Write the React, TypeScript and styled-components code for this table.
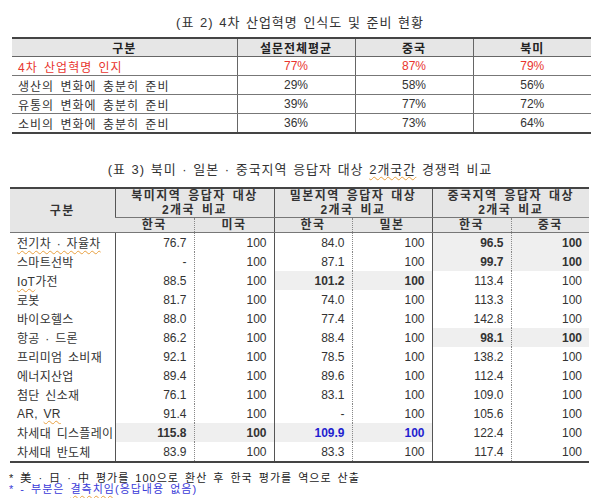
import React from "react";
import styled, { createGlobalStyle, css } from "styled-components";

const Global = createGlobalStyle`
  html, body { margin: 0; padding: 0; background: #ffffff; }
  body { font-family: "Liberation Sans", "Noto Sans CJK KR", sans-serif; color: #222222; }
`;

const Page = styled.div`
  width: 600px;
  height: 498px;
  box-sizing: border-box;
  padding: 14px 0 0 0;
  overflow: hidden;
`;

const Title = styled.div<{ $mt?: number }>`
  text-align: center;
  font-size: 13px;
  line-height: 18px;
  letter-spacing: 1px;
  word-spacing: 1px;
  color: #333333;
  margin-top: ${(p) => p.$mt ?? 0}px;
`;

const Squiggle = styled.span`
  text-decoration: underline wavy #e8a040;
  text-decoration-thickness: 1px;
  text-underline-offset: 2px;
`;

/* ---------- Table 2 ---------- */

const Table2 = styled.table`
  margin: 5px 0 0 12px;
  width: 579px;
  border-collapse: collapse;
  table-layout: fixed;
  border-top: 2px solid #444444;
  border-bottom: 2px solid #444444;
  font-size: 12px;
`;

const T2Head = styled.th`
  height: 17px;
  padding: 0;
  background: #e6e6e6;
  font-weight: bold;
  font-size: 12px;
  letter-spacing: 1px;
  text-align: center;
  border-bottom: 1px solid #666666;
  border-left: 1px solid #666666;
  &:first-child { border-left: none; }
`;

const T2Cell = styled.td<{ $red?: boolean; $label?: boolean }>`
  height: 18px;
  padding: 0 0 0 ${(p) => (p.$label ? 6 : 0)}px;
  text-align: ${(p) => (p.$label ? "left" : "center")};
  color: ${(p) => (p.$red ? "#e8352e" : "#333333")};
  letter-spacing: ${(p) => (p.$label ? "1px" : "0")};
  word-spacing: ${(p) => (p.$label ? "2px" : "0")};
  border-bottom: 1px solid #777777;
  border-left: 1px solid #666666;
  white-space: nowrap;
  &:first-child { border-left: none; }
`;

/* ---------- Table 3 ---------- */

const Table3 = styled.table`
  margin: 8px 0 0 10px;
  width: 579px;
  border-collapse: collapse;
  table-layout: fixed;
  border-top: 2px solid #444444;
  border-bottom: 2px solid #444444;
  font-size: 12px;
`;

const T3Head = styled.th<{ $dashedRight?: boolean; $sub?: boolean }>`
  padding: 0;
  background: #e6e6e6;
  font-weight: bold;
  font-size: 12px;
  line-height: 14px;
  letter-spacing: 1.5px;
  word-spacing: 2px;
  text-align: center;
  color: #333333;
  height: ${(p) => (p.$sub ? 14 : 28)}px;
  border-bottom: 1px solid #777777;
  border-left: 1px solid #555555;
  &:first-child { border-left: none; }
  ${(p) =>
    p.$dashedRight &&
    css`
      border-right: 1px dotted #888888;
    `}
`;

const T3Row = styled.tr``;

const T3Label = styled.td`
  height: 19px;
  padding: 0 0 0 7px;
  text-align: left;
  color: #333333;
  white-space: nowrap;
  letter-spacing: 0.3px;
  word-spacing: 2px;
`;

const T3Cell = styled.td<{ $solidLeft?: boolean; $hl?: boolean; $bold?: boolean; $blue?: boolean }>`
  height: 19px;
  padding: 0 7px 0 0;
  text-align: right;
  white-space: nowrap;
  color: ${(p) => (p.$blue ? "#1f1fd0" : "#333333")};
  font-weight: ${(p) => (p.$bold ? "bold" : "normal")};
  background: ${(p) => (p.$hl ? "#efefef" : "transparent")};
  border-left: ${(p) => (p.$solidLeft ? "1px solid #555555" : "1px dotted #888888")};
`;

const Notes = styled.div`
  margin: 10px 0 0 9px;
  font-size: 11px;
  line-height: 11px;
  letter-spacing: 1px;
  word-spacing: 2px;
`;

const NoteLine = styled.div<{ $blue?: boolean }>`
  color: ${(p) => (p.$blue ? "#3a3ad8" : "#222222")};
`;

type Pair = [string, string];
type Region = { v: Pair; hl?: boolean; bold?: boolean; blue?: boolean };
type Row = { label: React.ReactNode; regions: [Region, Region, Region] };

const r = (a: string, b: string, flags: Partial<Region> = {}): Region => ({ v: [a, b], ...flags });
const HB = { hl: true, bold: true };

const rows: Row[] = [
  { label: <Squiggle>전기차 · 자율차</Squiggle>, regions: [r("76.7", "100"), r("84.0", "100"), r("96.5", "100", HB)] },
  { label: "스마트선박", regions: [r("-", "100"), r("87.1", "100"), r("99.7", "100", HB)] },
  { label: <><Squiggle>IoT</Squiggle>가전</>, regions: [r("88.5", "100"), r("101.2", "100", HB), r("113.4", "100")] },
  { label: "로봇", regions: [r("81.7", "100"), r("74.0", "100"), r("113.3", "100")] },
  { label: "바이오헬스", regions: [r("88.0", "100"), r("77.4", "100"), r("142.8", "100")] },
  { label: "항공 · 드론", regions: [r("86.2", "100"), r("88.4", "100"), r("98.1", "100", HB)] },
  { label: "프리미엄 소비재", regions: [r("92.1", "100"), r("78.5", "100"), r("138.2", "100")] },
  { label: "에너지산업", regions: [r("89.4", "100"), r("89.6", "100"), r("112.4", "100")] },
  { label: "첨단 신소재", regions: [r("76.1", "100"), r("83.1", "100"), r("109.0", "100")] },
  { label: <>AR, <Squiggle>VR</Squiggle></>, regions: [r("91.4", "100"), r("-", "100"), r("105.6", "100")] },
  { label: "차세대 디스플레이", regions: [r("115.8", "100", HB), r("109.9", "100", { ...HB, blue: true }), r("122.4", "100")] },
  { label: "차세대 반도체", regions: [r("83.9", "100"), r("83.3", "100"), r("117.4", "100")] },
];

const t2rows = [
  { label: "4차 산업혁명 인지", v: ["77%", "87%", "79%"], red: true },
  { label: "생산의 변화에 충분히 준비", v: ["29%", "58%", "56%"] },
  { label: "유통의 변화에 충분히 준비", v: ["39%", "77%", "72%"] },
  { label: "소비의 변화에 충분히 준비", v: ["36%", "73%", "64%"] },
];

const regionHeads = [
  ["북미지역 응답자 대상", "2개국 비교", "한국", "미국"],
  ["밀본지역 응답자 대상", "2개국 비교", "한국", "밀본"],
  ["중국지역 응답자 대상", "2개국 비교", "한국", "중국"],
];

export default function App() {
  return (
    <Page>
      <Global />
      <Title>(표 2) 4차 산업혁명 인식도 및 준비 현황</Title>
      <Table2>
        <colgroup>
          <col style={{ width: 225 }} />
          <col style={{ width: 118 }} />
          <col style={{ width: 118 }} />
          <col style={{ width: 118 }} />
        </colgroup>
        <thead>
          <tr>
            <T2Head>구분</T2Head>
            <T2Head>설문전체평균</T2Head>
            <T2Head>중국</T2Head>
            <T2Head>북미</T2Head>
          </tr>
        </thead>
        <tbody>
          {t2rows.map((row) => (
            <tr key={row.label}>
              <T2Cell $label $red={row.red}>{row.label}</T2Cell>
              {row.v.map((x, i) => (
                <T2Cell key={i} $red={row.red}>{x}</T2Cell>
              ))}
            </tr>
          ))}
        </tbody>
      </Table2>

      <Title $mt={27}>
        (표 3) 북미 · 일본 · 중국지역 응답자 대상 <Squiggle>2개국간</Squiggle> 경쟁력 비교
      </Title>
      <Table3>
        <colgroup>
          <col style={{ width: 105 }} />
          <col style={{ width: 79 }} />
          <col style={{ width: 80 }} />
          <col style={{ width: 78 }} />
          <col style={{ width: 80 }} />
          <col style={{ width: 79 }} />
          <col style={{ width: 78 }} />
        </colgroup>
        <thead>
          <tr>
            <T3Head rowSpan={2}>구분</T3Head>
            {regionHeads.map((h) => (
              <T3Head key={h[0]} colSpan={2}>
                {h[0]}
                <br />
                {h[1]}
              </T3Head>
            ))}
          </tr>
          <tr>
            {regionHeads.map((h) => (
              <React.Fragment key={h[0]}>
                <T3Head $sub $dashedRight>{h[2]}</T3Head>
                <T3Head $sub style={{ borderLeftStyle: "dotted" }}>{h[3]}</T3Head>
              </React.Fragment>
            ))}
          </tr>
        </thead>
        <tbody>
          {rows.map((row, ri) => (
            <T3Row key={ri}>
              <T3Label>{row.label}</T3Label>
              {row.regions.map((reg, gi) => (
                <React.Fragment key={gi}>
                  <T3Cell $solidLeft $hl={reg.hl} $bold={reg.bold} $blue={reg.blue}>{reg.v[0]}</T3Cell>
                  <T3Cell $hl={reg.hl} $bold={reg.bold} $blue={reg.blue}>{reg.v[1]}</T3Cell>
                </React.Fragment>
              ))}
            </T3Row>
          ))}
        </tbody>
      </Table3>
      <Notes>
        <NoteLine>* 美 · 日 · 中 평가를 100으로 환산 후 한국 평가를 역으로 산출</NoteLine>
        <NoteLine $blue>* - 부분은 <Squiggle>결측치임</Squiggle>(응답내용 없음)</NoteLine>
      </Notes>
    </Page>
  );
}
